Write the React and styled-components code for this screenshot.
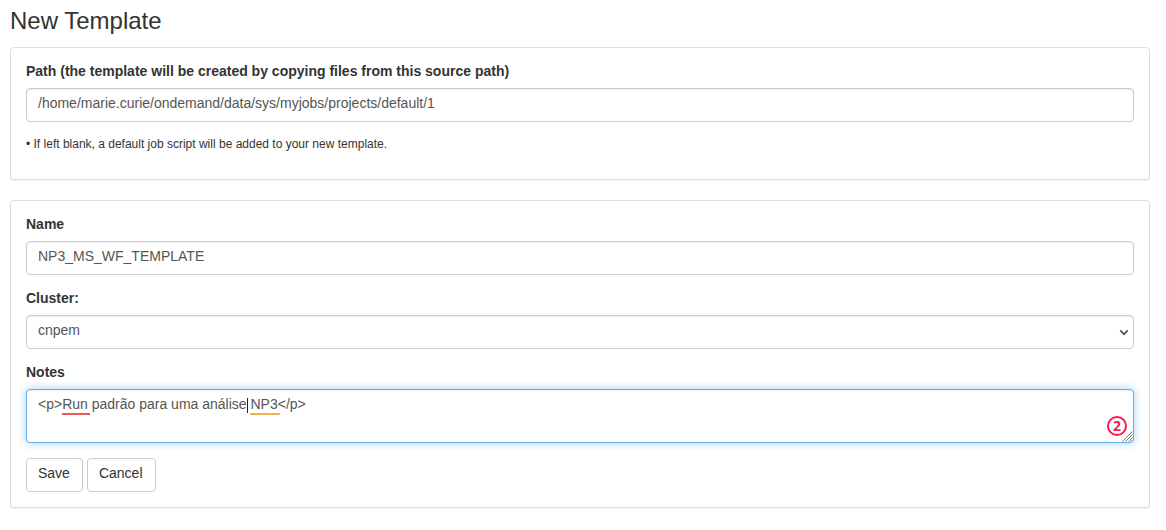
import React from "react";
import styled, { createGlobalStyle, css } from "styled-components";

const GlobalStyle = createGlobalStyle`
  *, *::before, *::after { box-sizing: border-box; }
  body {
    margin: 0;
    background: #fff;
    color: #333;
    font-family: "Liberation Sans", Arial, sans-serif;
    font-size: 14px;
    line-height: 20px;
  }
`;

const Page = styled.main`
  padding: 7px 16px 20px 10px;
`;

const Title = styled.h1`
  margin: 0 0 12px;
  font-size: 24px;
  line-height: 28px;
  font-weight: 400;
`;

const Panel = styled.section`
  margin-bottom: 20px;
  padding: 15px;
  border: 1px solid #ddd;
  border-radius: 4px;
  background: #fff;
  box-shadow: 0 1px 1px rgba(0, 0, 0, 0.05);
`;

const Field = styled.div`
  margin-bottom: 15px;
`;

const Label = styled.label`
  display: block;
  margin-bottom: 9px;
  font-weight: 700;
  line-height: 16px;
`;

const control = css`
  display: block;
  width: 100%;
  height: 34px;
  margin: 0;
  padding: 4px 11px 8px;
  border: 1px solid #ccc;
  border-radius: 4px;
  background: #fff;
  color: #555;
  font: inherit;
  box-shadow: inset 0 1px 1px rgba(0, 0, 0, 0.075);
  outline: 0;

  &:focus {
    border-color: #66afe9;
  }
`;

const TextInput = styled.input`
  ${control}
`;

const Select = styled.select`
  ${control}
  appearance: none;
`;

const TextArea = styled.textarea`
  ${control}
  height: 54px;
  resize: none;
  overflow: hidden;
  border-color: #66afe9;
  box-shadow: inset 0 1px 1px rgba(0, 0, 0, 0.075),
    0 0 8px rgba(102, 175, 233, 0.6);
`;

const ControlWrap = styled.div`
  position: relative;
`;

const Chevron = styled.svg`
  position: absolute;
  top: 14px;
  right: 5px;
  pointer-events: none;
`;

const Mark = styled.span`
  position: absolute;
  top: 24px;
  left: ${(p) => p.$left}px;
  width: ${(p) => p.$width}px;
  height: 2px;
  background: ${(p) => p.$color};
  pointer-events: none;
`;

const Caret = styled.span`
  position: absolute;
  top: 9px;
  left: 221px;
  width: 1px;
  height: 15px;
  background: #222;
  pointer-events: none;
`;

const IssueCount = styled.span`
  position: absolute;
  right: 7px;
  bottom: 7px;
  width: 20px;
  height: 20px;
  border: 2px solid #f5194f;
  border-radius: 50%;
  color: #f5194f;
  font-family: "Open Sans", sans-serif;
  font-size: 14px;
  font-weight: 700;
  line-height: 16px;
  text-align: center;
  pointer-events: none;
`;

const Grip = styled.svg`
  position: absolute;
  right: 1px;
  bottom: 1px;
  pointer-events: none;
`;

const Help = styled.p`
  margin: 12px 0 10px;
  font-size: 12px;
  line-height: 20px;
`;

const Actions = styled.div`
  display: flex;
  gap: 4px;
`;

const Button = styled.button`
  height: 34px;
  padding: 4px 12px 8px 11px;
  border: 1px solid #ccc;
  border-radius: 4px;
  background: #fff;
  color: #333;
  font: inherit;
  cursor: pointer;
`;

export default function App() {
  return (
    <>
      <GlobalStyle />
      <Page>
        <Title>New Template</Title>
        <form onSubmit={(e) => e.preventDefault()}>
          <Panel>
            <Label htmlFor="path">
              Path (the template will be created by copying files from this
              source path)
            </Label>
            <TextInput
              id="path"
              type="text"
              spellCheck={false}
              aria-describedby="path-help"
              defaultValue="/home/marie.curie/ondemand/data/sys/myjobs/projects/default/1"
            />
            <Help id="path-help">
              • If left blank, a default job script will be added to your new
              template.
            </Help>
          </Panel>
          <Panel>
            <Field>
              <Label htmlFor="name">Name</Label>
              <TextInput
                id="name"
                type="text"
                spellCheck={false}
                defaultValue="NP3_MS_WF_TEMPLATE"
              />
            </Field>
            <Field>
              <Label htmlFor="cluster">Cluster:</Label>
              <ControlWrap>
                <Select id="cluster" defaultValue="cnpem">
                  <option value="cnpem">cnpem</option>
                </Select>
                <Chevron width="10" height="8" viewBox="0 0 10 8" aria-hidden="true">
                  <path
                    d="M1.2 1.4 5 5.2 8.8 1.4"
                    fill="none"
                    stroke="#555"
                    strokeWidth="1.8"
                  />
                </Chevron>
              </ControlWrap>
            </Field>
            <Field>
              <Label htmlFor="notes">Notes</Label>
              <ControlWrap>
                <TextArea
                  id="notes"
                  spellCheck={false}
                  defaultValue="<p>Run padrão para uma análise NP3</p>"
                />
                <Mark $left={36} $width={28} $color="#eb5757" />
                <Mark $left={224} $width={30} $color="#f2b24c" />
                <Caret />
                <IssueCount>2</IssueCount>
                <Grip width="11" height="11" viewBox="0 0 11 11" aria-hidden="true">
                  <path
                    d="M0.5 10.5 10.5 0.5M3.5 10.5 10.5 3.5M6.5 10.5 10.5 6.5M9 10.5 10.5 9"
                    fill="none"
                    stroke="#777"
                    strokeWidth="1"
                  />
                </Grip>
              </ControlWrap>
            </Field>
            <Actions>
              <Button type="submit">Save</Button>
              <Button type="button">Cancel</Button>
            </Actions>
          </Panel>
        </form>
      </Page>
    </>
  );
}
